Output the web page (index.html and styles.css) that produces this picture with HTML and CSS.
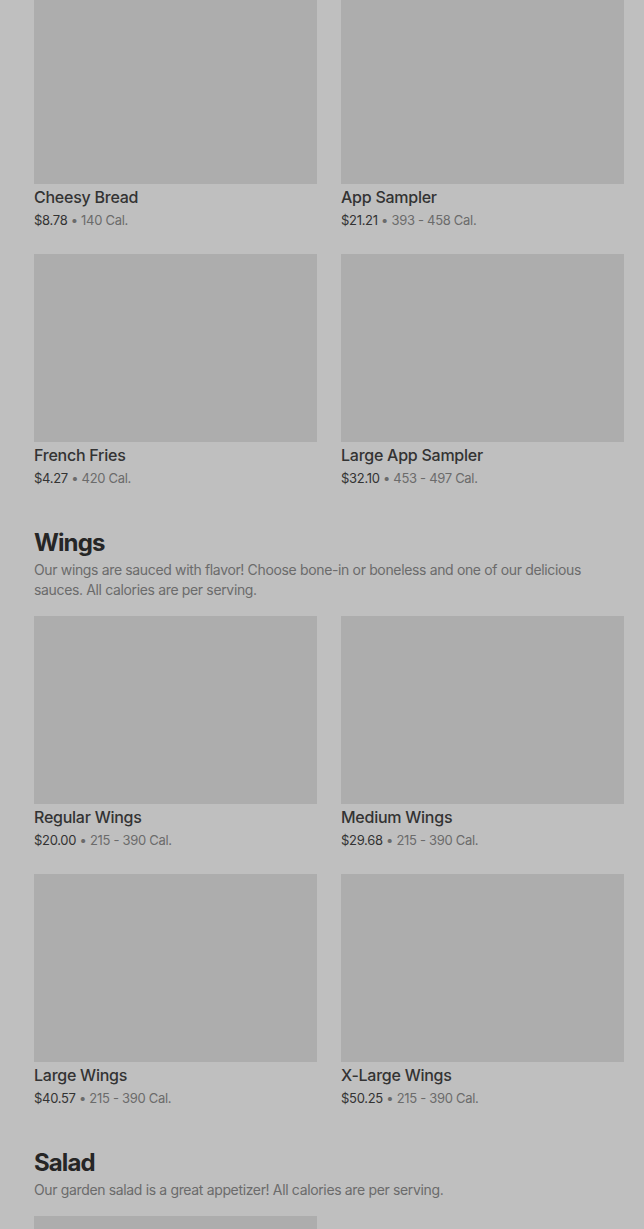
FILE: index.html
```html
<!DOCTYPE html>
<html lang="en">
<head>
    <meta charset="UTF-8">
    <meta name="viewport" content="width=device-width, initial-scale=1.0">
    <title>Menu</title>
    <link rel="stylesheet" href="styles.css">
</head>
<body>
    <div class="menu">
        <section class="section first">
            <div class="grid">
                <div class="item">
                    <div class="photo"></div>
                    <div class="name">Cheesy Bread</div>
                    <div class="meta"><span class="price">$8.78</span> • 140 Cal.</div>
                </div>
                <div class="item">
                    <div class="photo"></div>
                    <div class="name">App Sampler</div>
                    <div class="meta"><span class="price">$21.21</span> • 393 - 458 Cal.</div>
                </div>
                <div class="item">
                    <div class="photo"></div>
                    <div class="name">French Fries</div>
                    <div class="meta"><span class="price">$4.27</span> • 420 Cal.</div>
                </div>
                <div class="item">
                    <div class="photo"></div>
                    <div class="name">Large App Sampler</div>
                    <div class="meta"><span class="price">$32.10</span> • 453 - 497 Cal.</div>
                </div>
            </div>
        </section>

        <section class="section">
            <h2>Wings</h2>
            <p class="desc">Our wings are sauced with flavor! Choose bone-in or boneless and one of our delicious sauces. All calories are per serving.</p>
            <div class="grid">
                <div class="item">
                    <div class="photo"></div>
                    <div class="name">Regular Wings</div>
                    <div class="meta"><span class="price">$20.00</span> • 215 - 390 Cal.</div>
                </div>
                <div class="item">
                    <div class="photo"></div>
                    <div class="name">Medium Wings</div>
                    <div class="meta"><span class="price">$29.68</span> • 215 - 390 Cal.</div>
                </div>
                <div class="item">
                    <div class="photo"></div>
                    <div class="name">Large Wings</div>
                    <div class="meta"><span class="price">$40.57</span> • 215 - 390 Cal.</div>
                </div>
                <div class="item">
                    <div class="photo"></div>
                    <div class="name">X-Large Wings</div>
                    <div class="meta"><span class="price">$50.25</span> • 215 - 390 Cal.</div>
                </div>
            </div>
        </section>

        <section class="section">
            <h2>Salad</h2>
            <p class="desc">Our garden salad is a great appetizer! All calories are per serving.</p>
            <div class="grid">
                <div class="item">
                    <div class="photo"></div>
                </div>
            </div>
        </section>
    </div>
</body>
</html>
```

FILE: styles.css
```css
body {
    margin: 0;
    padding: 0;
    background-color: #bfbfbf;
    font-family: Inter, "Noto Sans", sans-serif;
    color: #333;
}

.menu {
    margin-top: -4px;
    padding: 0 20px 0 34px;
}

.section {
    padding-top: 39px;
}

.section.first {
    padding-top: 0;
}

.section h2 {
    margin: 0;
    font-size: 24px;
    line-height: 32px;
    font-weight: 700;
    color: #262626;
    letter-spacing: -0.9px;
}

.desc {
    margin: 1px 0 16px 0;
    font-size: 14px;
    line-height: 20px;
    color: #6b6b6b;
    letter-spacing: -0.35px;
}

.grid {
    display: grid;
    grid-template-columns: 1fr 1fr;
    column-gap: 24px;
    row-gap: 24px;
}

.photo {
    height: 188px;
    background-color: #adadad;
}

.name {
    padding-top: 1px;
    font-size: 16px;
    line-height: 24px;
    font-weight: 500;
    color: #333;
    letter-spacing: -0.25px;
}

.meta {
    margin-top: 1px;
    font-size: 13px;
    line-height: 20px;
    color: #6b6b6b;
    letter-spacing: -0.3px;
}

.price {
    color: #333;
}
```
